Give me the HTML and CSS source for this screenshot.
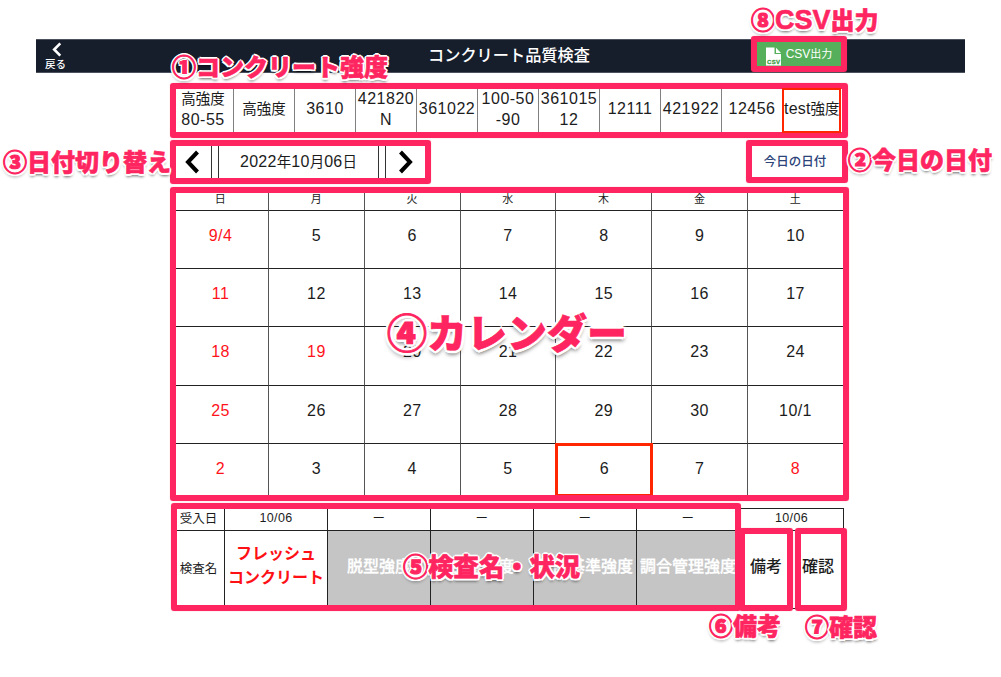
FILE: index.html
```html
<!DOCTYPE html>
<html lang="ja">
<head>
<meta charset="utf-8">
<title>コンクリート品質検査</title>
<link rel="stylesheet" href="styles.css">
</head>
<body>
<div class="app">
  <header class="bar">
    <div class="back">
      <svg class="back-icon" viewBox="0 0 12 16"><path d="M9.500 1.500 3 8l6.500 6.500" fill="none" stroke="#fff" stroke-width="2.800"/></svg>
      <span>戻る</span>
    </div>
    <h1 class="title">コンクリート品質検査</h1>
    <div class="csv">
      <svg class="csv-icon" viewBox="0 0 16 19"><path d="M0 .5h8.500v6.500H15V18.500H0z" fill="#fff"/><path d="M10 .8 15 6H10z" fill="#fff"/><text x="1" y="16.800" class="csv-mark" textLength="13">CSV</text></svg>
      <span>CSV<small>出力</small></span>
    </div>
  </header>

  <main class="content">
    <div class="strengths">
      <div><small>高強度</small><br>80-55</div>
      <div><small>高強度</small></div>
      <div>3610</div>
      <div>421820<br>N</div>
      <div>361022</div>
      <div>100-50<br>-90</div>
      <div>361015<br>12</div>
      <div>12111</div>
      <div>421922</div>
      <div>12456</div>
      <div class="picked">test<small>強度</small></div>
    </div>

    <div class="controls">
      <svg class="arrow" viewBox="0 0 16 24"><path d="M13.500 2 4 12l9.500 10" fill="none" stroke="#000" stroke-width="4"/></svg>
      <div class="date"><div>2022<small>年</small>10<small>月</small>06<small>日</small></div></div>
      <svg class="arrow next" viewBox="0 0 16 24"><path d="m2.500 2 9.500 10-9.500 10" fill="none" stroke="#000" stroke-width="4"/></svg>
      <div class="today">今日の日付</div>
    </div>

    <div class="calendar">
      <div>日</div><div>月</div><div>火</div><div>水</div><div>木</div><div>金</div><div>土</div>
      <div class="red">9/4</div><div>5</div><div>6</div><div>7</div><div>8</div><div>9</div><div>10</div>
      <div class="red">11</div><div>12</div><div>13</div><div>14</div><div>15</div><div>16</div><div>17</div>
      <div class="red">18</div><div class="red">19</div><div>20</div><div>21</div><div>22</div><div>23</div><div>24</div>
      <div class="red">25</div><div>26</div><div>27</div><div>28</div><div>29</div><div>30</div><div>10/1</div>
      <div class="red">2</div><div>3</div><div>4</div><div>5</div><div class="selected">6</div><div>7</div><div class="red">8</div>
    </div>

    <div class="tests">
      <div class="label">受入日</div><div class="day">10/06</div><div class="day">ー</div><div class="day">ー</div><div class="day">ー</div><div class="day">ー</div><div class="day wide">10/06</div>
      <div class="label">検査名</div><div class="fresh">フレッシュ<br>コンクリート</div><div class="gray">脱型強度</div><div class="gray">出荷強度</div><div class="gray">設計基準強度</div><div class="gray">調合管理強度</div><div class="action">備考</div><div class="action">確認</div>
    </div>
  </main>
</div>

<div class="frame f1"></div><div class="frame f2"></div><div class="frame f3"></div><div class="frame f4"></div>
<div class="frame f5"></div><div class="frame f6"></div><div class="frame f7"></div><div class="frame f8"></div>
<div class="note n1"><b>①</b>コンクリート強度</div>
<div class="note n2"><b>②</b>今日の日付</div>
<div class="note n3"><b>③</b>日付切り替え</div>
<div class="note n4"><b>④</b>カレンダー</div>
<div class="note n5"><b>⑤</b>検査名・状況</div>
<div class="note n6"><b>⑥</b>備考</div>
<div class="note n7"><b>⑦</b>確認</div>
<div class="note n8"><b>⑧</b><span class="latin">CSV</span>出力</div>
</body>
</html>
```
FILE: styles.css
```css
* { box-sizing: border-box; }
body {
  margin: 0;
  width: 1001px;
  height: 677px;
  overflow: hidden;
  position: relative;
  background: #fff;
  color: #1c1c1c;
  font-family: "Liberation Sans", "Noto Sans CJK JP", sans-serif;
}
small { font-size: 14.5px; letter-spacing: 0; line-height: 0; }
.app { padding: 39px 36px 0; }

.bar {
  height: 34px;
  display: grid;
  grid-template-columns: 39px 1fr 84px 124px;
  background: #161d2b;
  border-top: 1px solid #4c525d;
  border-bottom: 1px solid #4c525d;
  color: #fff;
}
.back { display: flex; flex-direction: column; align-items: center; font-size: 10.5px; line-height: 14px; padding-top: 2px; font-weight: 500; }
.back-icon { width: 12px; height: 15px; margin-left: 3px; flex: none; }
.title { width: 174px; margin: 0 0 0 347px; text-align: center; font-size: 16.2px; font-weight: 500; line-height: 31px; }
.csv { margin: 2px 0 0; height: 25px; background: #56b05b; display: flex; align-items: center; justify-content: center; gap: 4px; font-size: 12px; }
.csv small { font-size: 11px; }
.csv span { line-height: 20px; margin-top: -1px; }
.csv-icon { width: 16px; height: 19px; margin-top: 3px; }
.csv-mark { font: bold 6px "Liberation Sans", sans-serif; fill: #3f9c45; stroke: #3f9c45; stroke-width: .3px; }

.content { width: 671px; margin: 12px 0 0 137px; }
.strengths { height: 48px; display: grid; grid-template-columns: repeat(11, 61px); }
.strengths > div {
  border-right: 1px solid #808080;
  padding-bottom: 1px;
  align-content: center;
  text-align: center;
  white-space: nowrap;
  font-size: 16px;
  line-height: 21px;
  letter-spacing: .5px;
}
.strengths .picked { border: 2px solid #ff2600; margin: 3px 3px 0 -1px; height: 45px; letter-spacing: .2px; padding-bottom: 4px; position: relative; z-index: 3; }

.controls { height: 34px; margin-top: 12px; display: flex; align-items: center; }
.arrow { width: 16px; height: 24px; margin: -1px 0 0 11px; }
.next { margin-left: 12px; }
.date {
  width: 175px;
  height: 34px;
  margin-left: 11px;
  padding: 0 6px;
  border: solid #333;
  border-width: 0 1px;
  text-align: center;
  line-height: 33px;
  font-size: 16px;
  letter-spacing: .3px;
}
.date > div { border: solid #333; border-width: 0 1px; height: 34px; }
.today { margin-left: auto; width: 98px; text-align: center; font-size: 12.5px; line-height: 20px; margin-top: 0; color: #2b4379; font-weight: 500; }

.calendar {
  margin-top: 10px;
  display: grid;
  grid-template-columns: 96px repeat(5, 95.8px) 96px;
  grid-template-rows: 22px 58px 58px 59px 58px 53px;
  font-size: 16px;
  letter-spacing: .4px;
}
.calendar > div { border-right: 1px solid #555; border-bottom: 1px solid #222; text-align: center; padding-top: 16px; line-height: 18px; }
.calendar > div:nth-child(-n+7) { padding: 0; font-size: 11px; line-height: 20px; }
.calendar .selected { border: 3px solid #ff2600; margin: -1px -1px 0; padding-top: 14px; z-index: 1; }
.calendar .red { color: #ff131b; }

.tests {
  margin-top: 11px;
  display: grid;
  grid-template-columns: 52px 103px 103px 103px 103px 103px 53px 51px;
  grid-template-rows: 22px 78px;
  border-top: 1px solid #222;
}
.tests > div { border-right: 1px solid #222; border-bottom: 1px solid #222; display: flex; align-items: center; justify-content: center; white-space: nowrap; }
.tests .label { font-size: 12.500px; padding-bottom: 5px; }
.tests .day { font-size: 12.500px; padding-bottom: 4px; letter-spacing: .3px; }
.tests .wide { grid-column: span 2; }
.tests .fresh { color: #ff1015; font-size: 16px; font-weight: bold; line-height: 24px; text-align: center; padding-bottom: 7px; }
.tests .gray { background: #c5c5c5; color: #fff; font-size: 16px; font-weight: 500; padding-bottom: 9px; -webkit-text-stroke: .3px #fff; }
.tests .action { font-size: 16px; font-weight: 500; padding-bottom: 9px; }

/* Callout frames and labels laid over the screen */
.frame { position: absolute; z-index: 2; border: 6px solid #ff2560; border-radius: 3px; box-shadow: 0 0 1px 0 rgba(255, 37, 96, .6); }
.f1 { left: 170px; top: 83px; width: 678px; height: 55px; }
.f2 { left: 746px; top: 140px; width: 102px; height: 43px; }
.f3 { left: 170px; top: 140px; width: 261px; height: 44px; }
.f4 { left: 170px; top: 187px; width: 679px; height: 314px; }
.f5 { left: 171px; top: 503px; width: 570px; height: 108px; }
.f6 { left: 739px; top: 528px; width: 54px; height: 83px; }
.f7 { left: 795px; top: 528px; width: 52px; height: 83px; }
.f8 { left: 751px; top: 36px; width: 96px; height: 36px; }
.note {
  position: absolute;
  z-index: 3;
  white-space: nowrap;
  font: 900 24px/30px "Noto Sans CJK JP", sans-serif;
  color: #ff2560;
  -webkit-text-stroke: .6px #ff2560;
  text-shadow: 2px 0 #fff, -2px 0 #fff, 0 2px #fff, 0 -2px #fff, 1.500px 1.500px #fff, -1.500px 1.500px #fff, 1.500px -1.500px #fff, -1.500px -1.500px #fff, 0 3px 3px rgba(0, 0, 0, .6);
}
.note b { font-weight: inherit; -webkit-text-stroke-width: 1px; }
.latin { font-family: "Liberation Sans", sans-serif; font-size: 27px; line-height: 0; }
.n1 { left: 172px; top: 51px; }
.n2 { left: 848px; top: 144px; }
.n3 { left: 3px; top: 146px; }
.n4 { left: 387px; top: 307px; font-size: 40px; line-height: 48px; text-shadow: 3px 0 #fff, -3px 0 #fff, 0 3px #fff, 0 -3px #fff, 2px 2px #fff, -2px 2px #fff, 2px -2px #fff, -2px -2px #fff, 0 4px 4px rgba(0, 0, 0, .6); }
.n5 { left: 403px; top: 550px; font-size: 25.300px; }
.n6 { left: 709px; top: 610px; }
.n7 { left: 805px; top: 611px; }
.n8 { left: 751px; top: 4px; }
```
